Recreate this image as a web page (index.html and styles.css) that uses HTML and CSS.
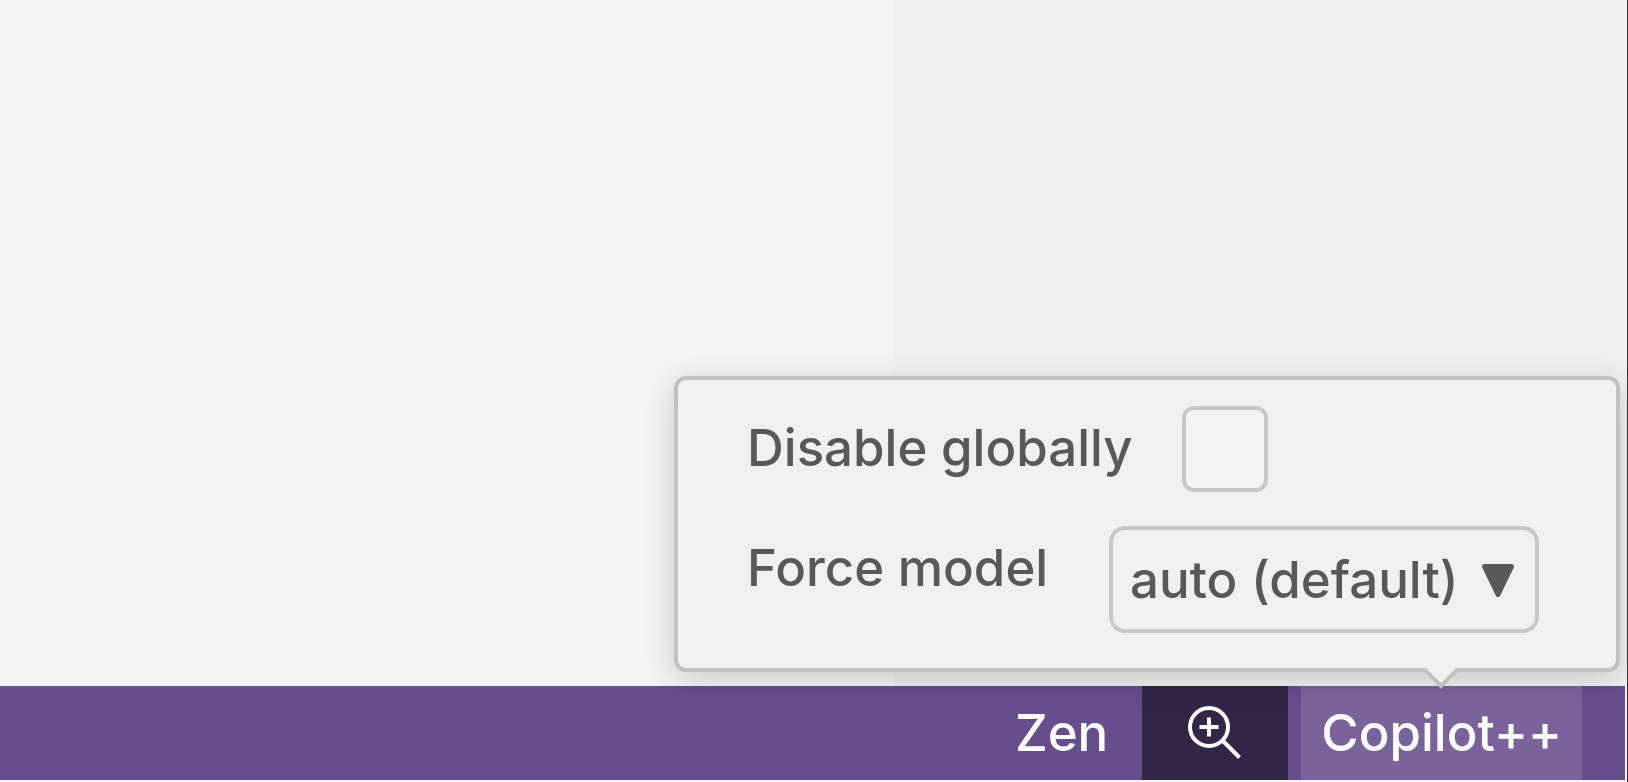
FILE: index.html
```html
<!DOCTYPE html>
<html lang="en">
<head>
<meta charset="utf-8">
<title>Copilot++ settings</title>
<link rel="stylesheet" href="styles.css">
</head>
<body>
<div class="window">
  <main class="workspace">
    <div class="editor"></div>
    <div class="sidebar"></div>
  </main>
  <footer class="status-bar">
    <button class="status-item zen" type="button">Zen</button>
    <button class="status-item zoom" type="button" aria-label="Zoom in">
      <svg class="zoom-icon" viewBox="0 0 54 54" fill="none" stroke="currentColor" stroke-width="4">
        <circle cx="21" cy="21" r="19"/>
        <path d="M21 11.500v19M11.500 21h19M34.500 34.500l17 17"/>
      </svg>
    </button>
    <button class="status-item copilot" type="button" aria-expanded="true">Copilot++</button>
  </footer>
  <section class="popover" aria-label="Copilot++ options">
    <div class="row">
      <label for="disable">Disable globally</label>
      <input class="checkbox" type="checkbox" id="disable">
    </div>
    <div class="row row-model">
      <label for="model">Force model</label>
      <div class="select-box">
        <select id="model"><option>auto (default)</option></select>
        <svg class="caret" viewBox="0 0 34 34"><path d="M3.500 3.500h27L17 31.500z" fill="currentColor" stroke="currentColor" stroke-width="5" stroke-linejoin="round"/></svg>
      </div>
    </div>
    <svg class="pointer" viewBox="0 0 36 22"><path d="M2 0h32L18 17z" fill="#f0f0f0"/><path d="M0.500 0.500L18 18L35.500 0.500" fill="none" stroke="#c1c1c1" stroke-width="4"/></svg>
  </section>
</div>
</body>
</html>
```
FILE: styles.css
```css
* { box-sizing: border-box; }

body {
  margin: 0;
  background: #f3f3f3;
  color: #585858;
  font-family: Inter, "Liberation Sans", sans-serif;
  font-size: 51px;
  font-weight: 500;
}

button, select { font: inherit; color: inherit; }

.window {
  position: relative;
  display: flex;
  flex-direction: column;
  min-height: 100vh;
  padding: 0 2px 2px 0;
  border-right: 1px solid #2d3338;
  overflow: hidden;
}

.workspace {
  flex: 1;
  display: grid;
  grid-template-columns: 55fr 45fr;
}

.editor { background: #f3f3f3; }
.sidebar { background: #efefef; }

.status-bar {
  display: flex;
  justify-content: flex-end;
  height: 94px;
  padding-right: 43px;
  background: #664d8c;
  color: #fff;
}

.status-item {
  padding: 0;
  border: 0;
  background: none;
  line-height: 94px;
}

.zen { padding: 0 34px; }

.zoom {
  display: grid;
  place-items: center;
  width: 146px;
  margin-right: 13px;
  background: #322646;
}

.zoom-icon { width: 54px; height: 54px; }

.copilot { padding: 0 20px; background: #7a639b; }

.popover {
  position: absolute;
  right: 7px;
  bottom: 110px;
  width: 946px;
  padding: 26px 77px 35px 69px;
  border: 4px solid #c1c1c1;
  border-radius: 12px;
  background: #f0f0f0;
  box-shadow: 0 8px 32px rgba(0, 0, 0, 0.16);
}

.row {
  display: flex;
  justify-content: flex-start;
  align-items: flex-start;
  gap: 49px;
  line-height: 84px;
}

.row-model {
  justify-content: space-between;
  margin-top: 34px;
}

.checkbox {
  appearance: none;
  width: 86px;
  height: 86px;
  margin: 0;
  border: 4px solid #c7c7c7;
  border-radius: 12px;
  background: #f3f3f3;
}

.select-box {
  display: grid;
  align-items: center;
}

.select-box > * { grid-area: 1 / 1; }

.select-box select {
  appearance: none;
  height: 107px;
  padding: 0 76px 0 17px;
  border: 4px solid #c7c7c7;
  border-radius: 16px;
  background: #f0f0f0;
}

.caret {
  justify-self: end;
  width: 34px;
  height: 34px;
  margin-right: 24px;
  pointer-events: none;
}

.pointer {
  position: absolute;
  top: 100%;
  right: 157px;
  width: 36px;
  height: 22px;
}
```
